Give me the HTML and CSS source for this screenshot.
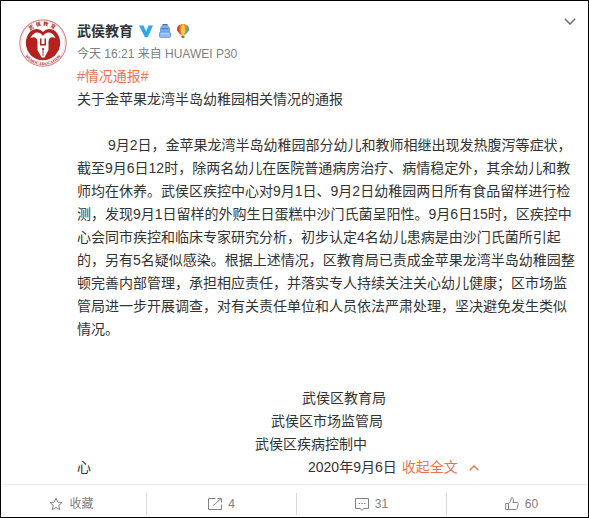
FILE: index.html
```html
<!DOCTYPE html>
<html lang="zh-CN">
<head>
<meta charset="utf-8">
<title>武侯教育</title>
<link rel="stylesheet" href="styles.css">
</head>
<body>
<article class="card">
  <div class="main">
    <a class="avatar" href="#" aria-label="武侯教育">
      <svg viewBox="0 0 48 48" width="48" height="48">
        <defs>
          <path id="arc-top" d="M6.500 24a17.500 17.500 0 0 1 35 0"/>
          <path id="arc-bottom" d="M2 24a22 22 0 0 0 44 0"/>
        </defs>
        <circle cx="24" cy="24" r="17.200" fill="#b3221f"/>
        <path fill="#fff" d="M8 16C12 9 20 8 24 13C28 8 36 9 40 16L40 5L8 5Z"/>
        <circle cx="24" cy="24" r="23.200" fill="none" stroke="#cf8f8d" stroke-width="1.200"/>
        <circle cx="24" cy="24" r="21.800" fill="none" stroke="#ecd0cf" stroke-width=".6"/>
        <path fill="#fff" d="M11.500 19C14 12.500 21 11.500 24 17C27 11.500 34 12.500 36.500 19C32.500 17 29.500 18.500 29.500 23V31L25.500 38.500H22.500L18.500 31V23C18.500 18.500 15.500 17 11.500 19Z"/>
        <path fill="#b3221f" d="M21 19.500H22.500V25H25.500V19.500H27V26.500H21Z"/>
        <path d="M24 30V37" stroke="#b3221f" stroke-width=".9"/>
        <circle cx="24" cy="30" r="1.100" fill="#b3221f"/>
        <text class="seal-top"><textPath href="#arc-top" startOffset="50%">武侯教育</textPath></text>
        <text class="seal-bottom"><textPath href="#arc-bottom" startOffset="50%">WUHOU EDUCATION</textPath></text>
      </svg>
    </a>
    <div class="detail">
      <header class="head">
        <a class="name" href="#">武侯教育</a>
        <svg class="badge" viewBox="0 0 14 14" width="14" height="14"><path fill="#29a9ef" d="M0 1.500H4.500L7.200 7.500L9.500 1.500H14L8.800 13H5.800Z"/></svg>
        <svg class="badge" viewBox="0 0 12 14" width="12" height="14">
          <path d="M4 1.800V.7H8V1.800" fill="none" stroke="#4c6fa5" stroke-width="1.200"/>
          <path d="M1.500 12V5Q1.500 1.500 6 1.500T10.500 5V12Z" fill="#7fb0ef" stroke="#5c8bd0" stroke-width=".7"/>
          <path d="M2.500 4.800H9.500" stroke="#416fb8"/>
          <rect x=".5" y="8" width="11" height="5.500" rx="1.200" fill="#8fbcf5" stroke="#5c8bd0" stroke-width=".7"/>
          <path d="M2 9.500H10" stroke="#c9e0ff" stroke-width=".8"/>
        </svg>
        <svg class="badge" viewBox="0 0 12 14" width="12" height="14">
          <path fill="#f08a22" d="M6 0C9.500 0 12 2.300 12 5.200C12 7.800 9 9.500 7.600 11H4.400C3 9.500 0 7.800 0 5.200C0 2.300 2.500 0 6 0Z"/>
          <path fill="#3aa7dd" d="M9.500 1C11.100 1.900 12 3.400 12 5.200C12 7.300 9.700 9 8 10.500C9.800 7.500 10.300 4 9.500 1Z"/>
          <path fill="#e5402f" d="M3.500 .7C1.300 1.500 0 3.200 0 5.200C0 7.300 2.300 9 4 10.500C2.500 7 2 3.500 3.500 .7Z"/>
          <path fill="#ffd23e" d="M6 0C3.500 2.500 3.500 7 5 11H7C8.500 7 8.500 2.500 6 0Z"/>
          <rect x="4.500" y="11.500" width="3" height="2.500" rx=".7" fill="#a9682b"/>
        </svg>
      </header>
      <p class="meta">今天 16:21 来自 HUAWEI P30</p>
      <div class="text">
        <p><a class="accent" href="#">#情况通报#</a></p>
        <p>关于金苹果龙湾半岛幼稚园相关情况的通报</p>
        <p class="body">9月2日，金苹果龙湾半岛幼稚园部分幼儿和教师相继出现发热腹泻等症状，截至9月6日12时，除两名幼儿在医院普通病房治疗、病情稳定外，其余幼儿和教师均在休养。武侯区疾控中心对9月1日、9月2日幼稚园两日所有食品留样进行检测，发现9月1日留样的外购生日蛋糕中沙门氏菌呈阳性。9月6日15时，区疾控中心会同市疾控和临床专家研究分析，初步认定4名幼儿患病是由沙门氏菌所引起的，另有5名疑似感染。根据上述情况，区教育局已责成金苹果龙湾半岛幼稚园整顿完善内部管理，承担相应责任，并落实专人持续关注关心幼儿健康；区市场监管局进一步开展调查，对有关责任单位和人员依法严肃处理，坚决避免发生类似情况。</p>
        <p class="sign sign-education">武侯区教育局</p>
        <p class="sign sign-market">武侯区市场监管局</p>
        <p class="sign sign-health">武侯区疾病控制中</p>
        <p class="last"><span class="wrapped">心</span><span>2020年9月6日</span><a class="accent fold" href="#">收起全文<svg viewBox="0 0 10 6" width="10" height="6"><path d="M.7 5.300L5 1L9.300 5.300" fill="none" stroke="#eb7350" stroke-width="1.400"/></svg></a></p>
      </div>
    </div>
    <button class="more" type="button" aria-label="更多"><svg viewBox="0 0 12 7" width="12" height="7"><path d="M.8 .8L6 6L11.200 .8" fill="none" stroke="#696e78" stroke-width="1.500"/></svg></button>
  </div>
  <footer class="actions">
    <button class="action" type="button"><svg viewBox="0 0 14 14" width="14" height="14"><path d="M7 1.200L8.700 5.100L13 5.500L9.800 8.300L10.700 12.600L7 10.400L3.300 12.600L4.200 8.300L1 5.500L5.300 5.100Z"/></svg>收藏</button>
    <button class="action" type="button"><svg viewBox="0 0 14 14" width="14" height="14"><path d="M7.500 1.500H.5V12.500H13.500V7.500M5.500 8.500L13 1.500M9.500 1.500H13.500V5.500"/></svg>4</button>
    <button class="action" type="button"><svg viewBox="0 0 14 14" width="14" height="14"><path d="M.5 1.500H13.500V11.500H9L7 13.300L5 11.500H.5Z"/><path d="M3.500 6.500H5M6.300 6.500H7.800M9.100 6.500H10.600"/></svg>31</button>
    <button class="action" type="button"><svg viewBox="0 0 14 14" width="14" height="14"><path d="M.7 6.500H3.500V12.500H.7ZM3.500 6.500C5.500 5.500 6 4 6 1.200C6.800 .3 8.500 .8 8.500 2.700L8 5.500H12C13.200 5.500 13.500 6.500 13.200 7.300L12 11.500C11.800 12.200 11.300 12.500 10.500 12.500H3.500"/></svg>60</button>
  </footer>
</article>
</body>
</html>
```

FILE: styles.css
```css
* {
  box-sizing: border-box;
}

body {
  margin: 0;
  background: #fff;
  color: #333;
  font-family: "Liberation Sans", "Noto Sans CJK SC", sans-serif;
  font-size: 14px;
  line-height: 23px;
}

p {
  margin: 0;
}

a {
  color: inherit;
  text-decoration: none;
}

button {
  padding: 0;
  border: 0;
  background: none;
  font: inherit;
  color: inherit;
}

.card {
  display: flex;
  flex-direction: column;
  min-height: 100vh;
  border: 1px solid #000;
  overflow: hidden;
}

.main {
  position: relative;
  display: flex;
  gap: 10px;
  padding: 18px 12px 0 18px;
}

.avatar {
  flex: none;
  height: 48px;
}

.seal-top,
.seal-bottom {
  fill: #b3221f;
  text-anchor: middle;
}

.seal-top {
  font-size: 5px;
  font-weight: bold;
  letter-spacing: 2px;
}

.seal-bottom {
  font-family: "Liberation Serif", serif;
  font-size: 4px;
  font-weight: bold;
}

.detail {
  flex: 1;
  min-width: 0;
}

.head {
  display: flex;
  align-items: center;
  gap: 6px;
  height: 24px;
}

.name {
  font-weight: bold;
}

.meta {
  color: #808080;
  font-size: 12px;
  line-height: 22px;
}

.accent {
  color: #eb7350;
}

.body {
  margin-top: 23px;
  text-indent: 31px;
}

.sign-education {
  margin-top: 46px;
  padding-left: 225px;
}

.sign-market {
  padding-left: 194px;
}

.sign-health {
  padding-left: 178px;
}

.last {
  display: flex;
}

.wrapped {
  flex: none;
  width: 231px;
}

.fold {
  display: flex;
  align-items: center;
  gap: 11px;
  margin-left: 5px;
}

.more {
  position: absolute;
  top: 17px;
  right: 12px;
  display: flex;
}

.actions {
  display: grid;
  grid-template-columns: repeat(4, 1fr);
  margin: 5px -9px 0 -4px;
  padding: 8px 0 1px;
  border-top: 1px solid #eee;
  color: #808080;
  font-size: 12px;
}

.action {
  display: flex;
  align-items: center;
  justify-content: center;
  gap: 6px;
  height: 22px;
  border-right: 1px solid #d9d9d9;
}

.action svg {
  fill: none;
  stroke: #808080;
}
```
